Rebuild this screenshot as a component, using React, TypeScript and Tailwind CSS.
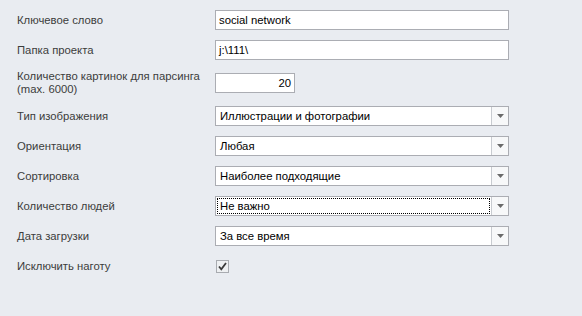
import { ReactNode } from "react";

const font = { fontFamily: '"Liberation Sans", Arial, sans-serif' };

function Row({ label, children, tall }: { label: ReactNode; children: ReactNode; tall?: boolean }) {
  return (
    <div className={`flex items-center ${tall ? "h-[26px]" : "h-[20px]"}`}>
      <div className="w-[198px] shrink-0 text-[11.3px] leading-[13px] text-[#3c3c3c]">{label}</div>
      {children}
    </div>
  );
}

function TextBox({ value, right, width }: { value: string; right?: boolean; width: string }) {
  return (
    <div
      className={`${width} h-[20px] bg-white border border-[#abadb3] flex items-center px-[3px] text-[11.3px] text-black ${
        right ? "justify-end" : ""
      }`}
    >
      {value}
    </div>
  );
}

function Select({ value, focused }: { value: string; focused?: boolean }) {
  return (
    <div className="w-[294px] h-[20px] bg-white border border-[#abadb3] flex">
      <div className="flex-1 p-[1px] flex">
        <div
          className={`flex-1 flex items-center px-[2px] text-[11.3px] text-black ${
            focused ? "border border-dotted border-black" : "border border-transparent"
          }`}
        >
          {value}
        </div>
      </div>
      <div className="w-[17px] border-l border-[#c8cbd0] bg-[#f7f8f9] flex items-center justify-center">
        <svg width="7" height="4" viewBox="0 0 7 4">
          <path d="M0 0h7L3.5 4z" fill="#6a6a6a" />
        </svg>
      </div>
    </div>
  );
}

export default function App() {
  return (
    <div className="w-[582px] h-[316px] bg-[#e9ecf1] pl-[17px] pt-[10px]" style={font}>
      <div className="flex flex-col gap-[10px]">
        <Row label="Ключевое слово">
          <TextBox value="social network" width="w-[294px]" />
        </Row>
        <Row label="Папка проекта">
          <TextBox value="j:\111\" width="w-[294px]" />
        </Row>
        <Row
          tall
          label={
            <>
              Количество картинок для парсинга
              <br />
              (max. 6000)
            </>
          }
        >
          <TextBox value="20" right width="w-[80px]" />
        </Row>
        <Row label="Тип изображения">
          <Select value="Иллюстрации и фотографии" />
        </Row>
        <Row label="Ориентация">
          <Select value="Любая" />
        </Row>
        <Row label="Сортировка">
          <Select value="Наиболее подходящие" />
        </Row>
        <Row label="Количество людей">
          <Select value="Не важно" focused />
        </Row>
        <Row label="Дата загрузки">
          <Select value="За все время" />
        </Row>
        <Row label="Исключить наготу">
          <div className="w-[13px] h-[13px] ml-[1px] border border-[#a8abb0] bg-[#eef0f2] flex items-center justify-center">
            <svg width="9" height="9" viewBox="0 0 9 9">
              <path d="M1 4.5l2.3 2.8L8 1" stroke="#3a3a3a" strokeWidth="1.8" fill="none" />
            </svg>
          </div>
        </Row>
      </div>
    </div>
  );
}
